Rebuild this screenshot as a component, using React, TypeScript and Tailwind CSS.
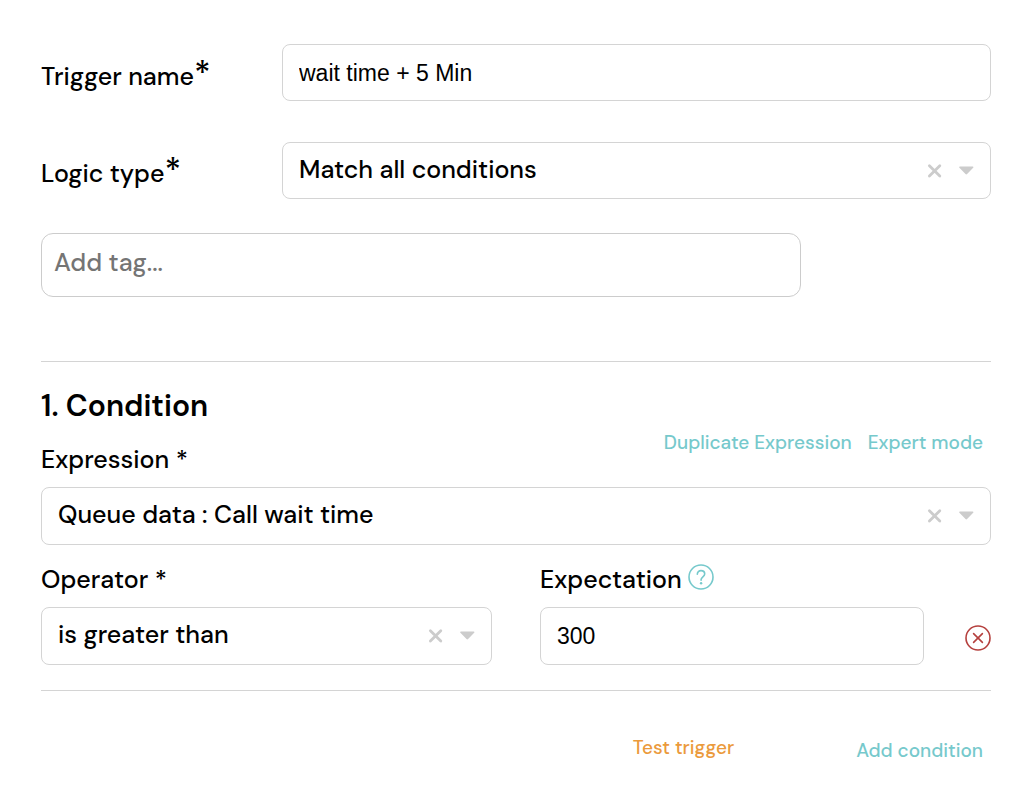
import React, { useState } from 'react';
import clsx from 'clsx';

const logicTypes = ['Match all conditions', 'Match any condition'];
const expressions = ['Queue data : Call wait time', 'Queue data : Calls waiting'];
const operators = ['is greater than', 'is less than', 'is equal to'];

const fieldClass =
  'w-full rounded-lg border border-[#d4d4d4] bg-white px-4 text-black focus:outline-none focus:border-[#76c9cc]';

interface SelectFieldProps {
  id: string;
  label: string;
  value: string;
  options: string[];
  className?: string;
  onChange: (value: string) => void;
}

const SelectField: React.FC<SelectFieldProps> = ({ id, label, value, options, className, onChange }) => (
  <div className="relative flex-1">
    <select
      id={id}
      value={value}
      onChange={(e) => onChange(e.target.value)}
      className={clsx(fieldClass, 'block appearance-none pr-20 pb-0.5 text-[25px]', className)}
    >
      <option value="" />
      {options.map((option) => (
        <option key={option} value={option}>
          {option}
        </option>
      ))}
    </select>
    <div className="pointer-events-none absolute inset-y-0 right-4 flex items-center gap-4 text-[#cccccc]">
      <button
        type="button"
        aria-label={`Clear ${label}`}
        onClick={() => onChange('')}
        className="pointer-events-auto cursor-pointer"
      >
        <svg width="16" height="16" viewBox="0 0 16 16" stroke="currentColor" strokeWidth="2.8" strokeLinecap="round">
          <path d="M2.4 2.7 12.8 12.9M12.8 2.7 2.4 12.9" />
        </svg>
      </button>
      <svg width="16" height="16" viewBox="0 0 16 16" fill="currentColor">
        <path d="M.9 3.4h12.8c.7 0 1 .8.5 1.3L8.1 11.1a1.1 1.1 0 0 1-1.6 0L.4 4.7c-.5-.5-.2-1.3.5-1.3Z" />
      </svg>
    </div>
  </div>
);

const Required = () => <sup className="top-0 align-baseline text-[34px] leading-none">*</sup>;

export default function App() {
  const [name, setName] = useState('wait time + 5 Min');
  const [logicType, setLogicType] = useState(logicTypes[0]);
  const [tag, setTag] = useState('');
  const [expression, setExpression] = useState(expressions[0]);
  const [operator, setOperator] = useState(operators[0]);
  const [expectation, setExpectation] = useState('300');

  return (
    <form
      className="bg-white pt-11 pr-[45px] pb-8 pl-[41px] font-['DM_Sans',Inter,sans-serif] text-[25px] leading-8 font-medium text-black"
      onSubmit={(e) => e.preventDefault()}
    >
      {/* Trigger settings */}
      <div className="flex items-center">
        <label htmlFor="name" className="w-[241px] shrink-0 pt-1">
          Trigger name
          <Required />
        </label>
        <input
          id="name"
          type="text"
          value={name}
          onChange={(e) => setName(e.target.value)}
          className={clsx(fieldClass, "h-[57px] pt-0.5 font-['Liberation_Sans',sans-serif] text-[23px]")}
        />
      </div>
      <div className="mt-[41px] flex items-center">
        <label htmlFor="logic" className="w-[241px] shrink-0 pt-0.5">
          Logic type
          <Required />
        </label>
        <SelectField
          id="logic"
          label="logic type"
          value={logicType}
          options={logicTypes}
          className="h-[57px]"
          onChange={setLogicType}
        />
      </div>
      <input
        type="text"
        aria-label="Add tag"
        placeholder="Add tag..."
        value={tag}
        onChange={(e) => setTag(e.target.value)}
        className="mt-[34px] block h-16 w-4/5 rounded-xl border border-[#cccccc] px-3 pb-1.5 placeholder:text-[#757575] focus:outline-none"
      />

      {/* Condition */}
      <section className="mt-16 border-y border-[#d4d4d4] pt-[23px] pb-[25px]">
        <h2 className="text-[30px] leading-[41px] font-semibold">1. Condition</h2>
        <div className="flex items-start justify-between">
          <label htmlFor="expression" className="pt-[18px]">
            Expression *
          </label>
          <div className="flex gap-4 pt-px pr-2 text-[19px]">
            <button type="button" className="cursor-pointer text-[#76c9cc]">
              Duplicate Expression
            </button>
            <button type="button" className="cursor-pointer text-[#76c9cc]">
              Expert mode
            </button>
          </div>
        </div>
        <div className="mt-[11px] flex">
          <SelectField
            id="expression"
            label="expression"
            value={expression}
            options={expressions}
            className="h-[58px]"
            onChange={setExpression}
          />
        </div>
        <div className="mt-[19px] grid grid-cols-2 gap-12">
          <div>
            <label htmlFor="operator" className="mb-[11px] block">
              Operator *
            </label>
            <SelectField
              id="operator"
              label="operator"
              value={operator}
              options={operators}
              className="h-[58px]"
              onChange={setOperator}
            />
          </div>
          <div>
            <div className="mb-[11px] flex gap-1.5">
              <label htmlFor="expectation">Expectation</label>
              <button type="button" aria-label="Help" className="cursor-pointer self-start text-[#76c9cc]">
                <svg width="26" height="26" viewBox="0 0 26 26" fill="none" stroke="currentColor" strokeWidth="1.6">
                  <circle cx="13" cy="13" r="12" />
                  <path d="M9.3 10.2c0-2.2 1.6-3.6 3.7-3.6s3.7 1.4 3.7 3.4c0 2.7-3.6 3-3.6 5.6v.6" strokeLinecap="round" />
                  <circle cx="13.1" cy="19.3" r="1.2" fill="currentColor" stroke="none" />
                </svg>
              </button>
            </div>
            <div className="flex items-center gap-[41px]">
              <input
                id="expectation"
                type="text"
                value={expectation}
                onChange={(e) => setExpectation(e.target.value)}
                className={clsx(fieldClass, "h-[58px] min-w-0 flex-1 font-['Liberation_Sans',sans-serif] text-[23px]")}
              />
              <button type="button" aria-label="Remove condition" className="cursor-pointer pt-1 text-[#b5403e]">
                <svg width="26" height="26" viewBox="0 0 26 26" fill="none" stroke="currentColor" strokeWidth="1.6">
                  <circle cx="13" cy="13" r="12" />
                  <path d="m8.6 8.6 8.8 8.8M17.4 8.6l-8.8 8.8" strokeLinecap="round" />
                </svg>
              </button>
            </div>
          </div>
        </div>
      </section>

      {/* Actions */}
      <div className="flex items-start justify-end gap-[122px] pt-[41px] pr-2 text-[19px]">
        <button type="button" className="cursor-pointer text-[#eb9a3c]">
          Test trigger
        </button>
        <button type="button" className="mt-[3px] cursor-pointer text-[#76c9cc]">
          Add condition
        </button>
      </div>
    </form>
  );
}
